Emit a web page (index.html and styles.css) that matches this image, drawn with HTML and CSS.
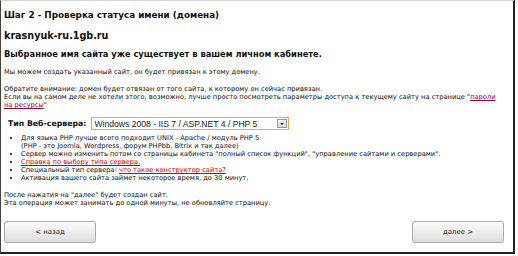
FILE: index.html
```
<!DOCTYPE html>
<html lang="ru">
<head>
    <meta charset="UTF-8">
    <title>Шаг 2 - Проверка статуса имени</title>
    <link rel="stylesheet" href="styles.css">
</head>
<body>
    <div class="wizard">
        <h1>Шаг 2 - Проверка статуса имени (домена)</h1>
        <h2>krasnyuk-ru.1gb.ru</h2>
        <h3>Выбранное имя сайта уже существует в вашем личном кабинете.</h3>
        <p>Мы можем создать указанный сайт, он будет привязан к этому домену.</p>
        <p class="warn">Обратите внимание: домен будет отвязан от того сайта, к которому он сейчас привязан.<br>
            Если вы на самом деле не хотели этого, возможно, лучше просто посмотреть параметры доступа к текущему сайту на странице "<a href="#" class="dark">пароли на ресурсы</a>"</p>

        <div class="server-row">
            <label for="serverType">Тип Веб-сервера:</label>
            <div class="select">
                <select id="serverType">
                    <option>Windows 2008 - IIS 7 / ASP.NET 4 / PHP 5</option>
                    <option>UNIX - Apache / модуль PHP 5</option>
                </select>
                <span class="select-arrow"></span>
            </div>
        </div>

        <ul class="notes">
            <li>Для языка PHP лучше всего подходит UNIX - Apache / модуль PHP 5<br>(PHP - это Joomla, Wordpress, форум PHPbb, Bitrix и так далее)</li>
            <li>Сервер можно изменить потом со страницы кабинета "полный список функций", "управление сайтами и серверами".</li>
            <li><a href="#">Справка по выбору типа сервера.</a></li>
            <li>Специальный тип сервера: <a href="#">что такое конструктор сайта?</a></li>
            <li>Активация вашего сайта займет некоторое время, до 30 минут.</li>
        </ul>

        <p class="after">После нажатия на "далее" будет создан сайт.<br>
            Эта операция может занимать до одной минуты, не обновляйте страницу.</p>

        <div class="buttons">
            <button>&lt; назад</button>
            <button>далее &gt;</button>
        </div>
    </div>
</body>
</html>
```
FILE: styles.css
```
body {
    margin: 0;
    font-family: 'DejaVu Sans', sans-serif;
    font-size: 6.7px;
    color: #111;
    background: #fff;
}
.wizard {
    width: 506px;
    height: 251px;
    padding: 0 3px;
    border-top: 1px solid #d4d4d4;
    border-left: 1px solid #444;
    border-right: 2px solid #222;
    border-bottom: 2px solid #222;
    display: flex;
    flex-direction: column;
}
h1,
h2,
h3 {
    font-size: 8.3px;
    line-height: 12px;
}
h1 {
    font-size: 8.8px;
    margin: 8px 0 0;
}
h2 {
    font-size: 9.6px;
    margin: 9px 0 0;
}
h3 {
    margin: 6px 0 0;
}
p {
    margin: 8px 0 0;
    line-height: 8px;
}
p.warn {
    margin-top: 9px;
    padding-right: 8px;
}
a {
    color: #cc0000;
}
a.dark {
    color: #990033;
}
.server-row {
    display: flex;
    align-items: center;
    gap: 5px;
    margin: 8px 0 0 4px;
}
label {
    font-weight: bold;
    font-size: 7.8px;
}
.select {
    display: flex;
    align-items: center;
    width: 196px;
    height: 11px;
    border: 1px solid #f0a848;
    background: #fff;
}
.select select {
    flex: 1;
    min-width: 0;
    appearance: none;
    border: none;
    background: none;
    padding: 0 2px;
    font-family: 'Liberation Sans', sans-serif;
    font-size: 8.6px;
    color: #222;
    outline: none;
}
.select-arrow {
    width: 10px;
    height: 9px;
    margin-right: 1px;
    border: 1px solid #999;
    background: linear-gradient(#f4f4f4, #d8d8d8);
    display: flex;
    align-items: center;
    justify-content: center;
    box-sizing: border-box;
}
.select-arrow::after {
    content: '';
    border-left: 2px solid transparent;
    border-right: 2px solid transparent;
    border-top: 2px solid #222;
}
.notes {
    margin: 4px 0 0;
    padding-left: 17px;
    line-height: 8px;
}
.after {
    margin-top: 9px;
}
.buttons {
    display: flex;
    justify-content: space-between;
    margin-top: auto;
    margin-bottom: 9px;
    padding-right: 6px;
}
button {
    width: 92px;
    height: 22px;
    font-family: 'DejaVu Sans', sans-serif;
    font-size: 6.9px;
    color: #222;
    border: 1px solid #aaa;
    border-radius: 3px;
    background: linear-gradient(#fafafa 0%, #eeeeee 50%, #dcdcdc 100%);
    cursor: pointer;
}
```
